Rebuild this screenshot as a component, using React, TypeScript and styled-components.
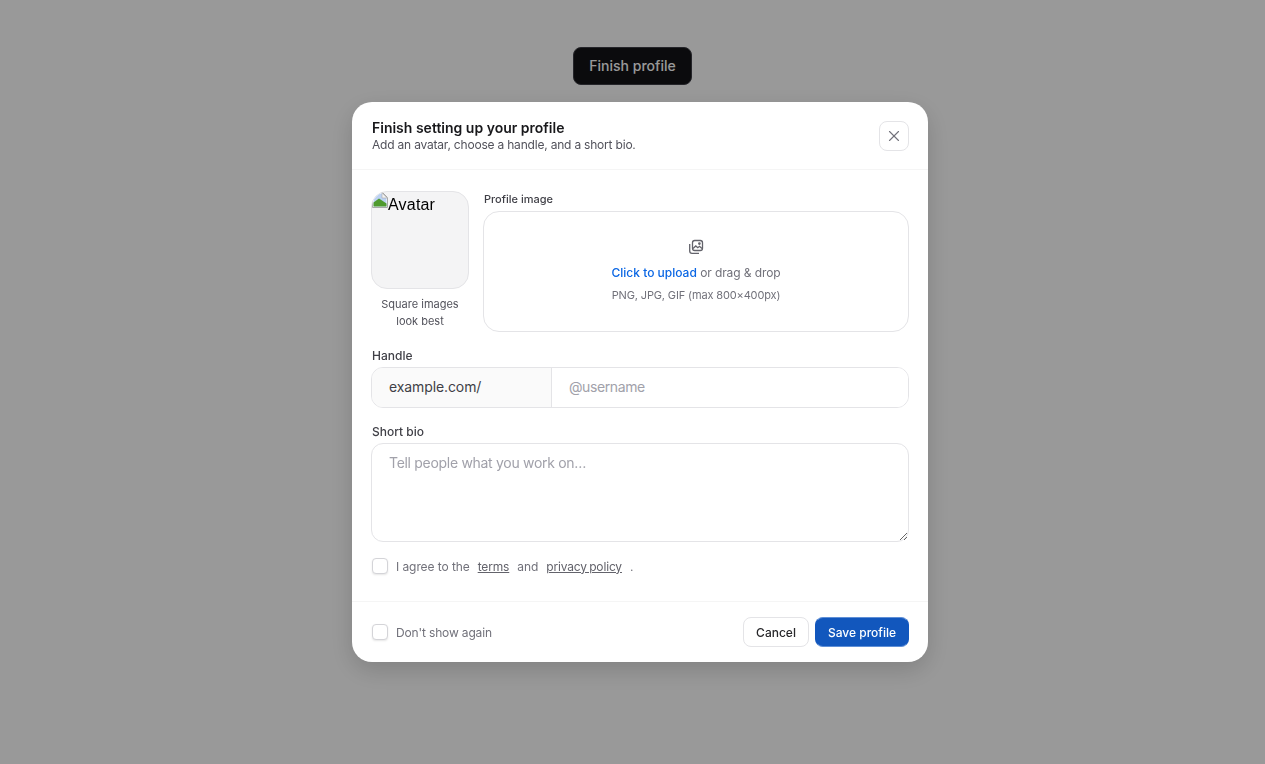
import styled, { createGlobalStyle } from "styled-components";
import { X } from "lucide-react";

const GlobalStyle = createGlobalStyle`
    * { box-sizing: border-box; }
    html, body { margin: 0; background: #fff; }
    body { font-family: Inter, "Liberation Sans", sans-serif; }
`

const Page = styled.main`
    display: flex;
    justify-content: center;
    padding-top: 47px;
    height: 764px;
`

const OpenButton = styled.button`
    width: 119px;
    height: 38px;
    padding: 0 0 2px;
    background: #131316;
    border: 1px solid #3f3f46;
    border-radius: 8px;
    color: #fff;
    font: 500 14px Inter, sans-serif;
`

const Overlay = styled.div`
    position: fixed;
    inset: 0;
    padding-left: 15px;
    background: rgba(0, 0, 0, 0.4);
    display: flex;
    align-items: center;
    justify-content: center;
`

const Modal = styled.section`
    width: 576px;
    height: 560px;
    background: #fff;
    border-radius: 20px;
    box-shadow: 0 8px 24px rgba(0, 0, 0, 0.16);
    display: flex;
    flex-direction: column;
`

const Header = styled.header`
    height: 68px;
    padding: 0 19px 0 20px;
    border-bottom: 1px solid #f5f5f5;
    display: flex;
    align-items: center;
    justify-content: space-between;
`

const Title = styled.h2`
    margin: 0;
    font-size: 14px;
    line-height: 18px;
    font-weight: 600;
    color: #18181b;
`

const Subtitle = styled.p`
    margin: 0;
    font-size: 12px;
    line-height: 16px;
    letter-spacing: -0.2px;
    color: #52525b;
`

const CloseButton = styled.button`
    width: 30px;
    height: 30px;
    padding: 0;
    background: #fff;
    border: 1px solid #e4e4e7;
    border-radius: 8px;
    color: #71717a;
    display: flex;
    align-items: center;
    justify-content: center;
`

const Body = styled.div`
    flex: 1;
    padding: 21px 19px 0 19px;
    display: flex;
    flex-direction: column;
`

const TopRow = styled.div`
    display: flex;
    gap: 14px;
`

const AvatarColumn = styled.div`
    width: 98px;
    display: flex;
    flex-direction: column;
    align-items: center;
`

const AvatarBox = styled.div`
    width: 98px;
    height: 98px;
    background: #f4f4f5;
    border: 1px solid #e4e4e7;
    border-radius: 16px;
    overflow: hidden;
    display: flex;
    align-items: flex-start;
    font: 16px/26px "Liberation Sans", sans-serif;
    letter-spacing: 0.2px;
    color: #000;
`

const AvatarHint = styled.p`
    margin: 7px 0 0;
    font-size: 11px;
    line-height: 17px;
    color: #52525b;
    text-align: center;
`

const UploadColumn = styled.div`
    flex: 1;
`

const SmallLabel = styled.div`
    padding-left: 1px;
    font-size: 11px;
    line-height: 16px;
    font-weight: 500;
    color: #3f3f46;
    margin-bottom: 4px;
`

const Dropzone = styled.div`
    height: 121px;
    border: 1px solid #e4e4e7;
    border-radius: 16px;
    display: flex;
    flex-direction: column;
    align-items: center;
    padding-top: 27px;
    color: #63636b;
`

const UploadText = styled.div`
    margin-top: 10px;
    font-size: 12px;
    line-height: 16px;
    letter-spacing: -0.1px;
    color: #71717a;
`

const UploadLink = styled.span`
    color: #0a66e4;
    font-weight: 500;
    letter-spacing: 0;
`

const UploadMeta = styled.div`
    margin-top: 6px;
    font-size: 11px;
    line-height: 16px;
    letter-spacing: -0.14px;
    color: #71717a;
`

const FieldLabel = styled.div`
    margin-top: 16px;
    margin-bottom: 3px;
    padding-left: 1px;
    font-size: 12px;
    line-height: 16px;
    font-weight: 500;
    color: #3f3f46;
`

const HandleGroup = styled.div`
    height: 41px;
    display: flex;
    border: 1px solid #e4e4e7;
    border-radius: 12px;
    overflow: hidden;
    font-size: 14px;
`

const HandlePrefix = styled.div`
    width: 180px;
    padding: 0 0 2px 17px;
    display: flex;
    align-items: center;
    background: #fafafa;
    border-right: 1px solid #e4e4e7;
    letter-spacing: -0.1px;
    color: #3f3f46;
`

const HandleInput = styled.input`
    flex: 1;
    border: 0;
    outline: 0;
    padding: 0 17px 2px;
    font: 14px Inter, sans-serif;
    letter-spacing: -0.4px;
    &::placeholder { color: #a1a1aa; }
`

const BioInput = styled.textarea`
    display: block;
    width: 100%;
    height: 99px;
    padding: 10px 17px;
    border: 1px solid #e4e4e7;
    border-radius: 12px;
    outline: 0;
    font: 14px/18px Inter, sans-serif;
    letter-spacing: -0.3px;
    &::placeholder { color: #a1a1aa; }
`

const CheckRow = styled.label`
    display: flex;
    align-items: center;
    height: 18px;
    font-size: 12px;
    color: #71717a;
`

const AgreeRow = styled(CheckRow)`
    margin-top: 15px;
    letter-spacing: -0.08px;
`

const Box = styled.span`
    width: 16px;
    height: 16px;
    margin-right: 8px;
    margin-left: 1px;
    background: #fff;
    border: 1px solid #d4d4d8;
    border-radius: 4px;
    box-shadow: 0 1px 2px rgba(0, 0, 0, 0.1);
`

const TermLink = styled.a`
    margin: 0 8px;
    color: #63636b;
    text-decoration: underline;
    letter-spacing: -0.15px;
    word-spacing: -1px;
`

const DontShow = styled.span`
    letter-spacing: -0.15px;
`

const Footer = styled.footer`
    height: 61px;
    padding: 0 19px;
    border-top: 1px solid #f5f5f5;
    display: flex;
    align-items: center;
    justify-content: space-between;
`

const Actions = styled.div`
    display: flex;
    gap: 6px;
`

const CancelButton = styled.button`
    width: 66px;
    height: 30px;
    background: #fff;
    border: 1px solid #e4e4e7;
    border-radius: 8px;
    color: #27272a;
    font: 500 12px Inter, sans-serif;
`

const SaveButton = styled.button`
    width: 94px;
    height: 30px;
    background: #1257bd;
    border: 1px solid #1257bd;
    border-top-color: #5f8fd6;
    border-bottom-color: #5f8fd6;
    border-radius: 8px;
    color: #fff;
    font: 500 12px Inter, sans-serif;
`

const BrokenImage = () => (
    <svg width="16" height="16" viewBox="0 0 16 16" style={{ flexShrink: 0 }}>
        <path d="M0.5 0.5h10l5 5v10H0.5z" fill="#fff" stroke="#a8a8a8" />
        <path d="M1.5 1.5h8.5v4.5h4.5v8.5H1.5z" fill="#bcd2f2" />
        <path d="M1.5 14.5v-4l5.5-4 7.5 5v3z" fill="#4f9a2e" />
        <path d="M10 1l5 5h-5z" fill="#f2f2f2" stroke="#a8a8a8" strokeWidth="0.6" />
    </svg>
)

const ImagesIcon = () => (
    <svg width="16" height="16" viewBox="0 0 16 16" fill="none" stroke="currentColor" strokeWidth="1.3">
        <rect x="4.5" y="1.5" width="10" height="10" rx="2.2" />
        <path d="M1.7 5v7a2.3 2.3 0 0 0 2.3 2.3H11" />
        <path d="M5 9.5l2.8-2.6 2 1.8 1.7-1.4 2.5 2.2" />
        <circle cx="11.4" cy="4.6" r="0.7" />
    </svg>
)

const App = () => {
    return (
        <>
            <GlobalStyle />
            <Page>
                <OpenButton>Finish profile</OpenButton>
            </Page>
            <Overlay>
                <Modal>
                    <Header>
                        <div>
                            <Title>Finish setting up your profile</Title>
                            <Subtitle>Add an avatar, choose a handle, and a short bio.</Subtitle>
                        </div>
                        <CloseButton><X size={18} strokeWidth={1.5} /></CloseButton>
                    </Header>
                    <Body>
                        <TopRow>
                            <AvatarColumn>
                                <AvatarBox><BrokenImage />Avatar</AvatarBox>
                                <AvatarHint>Square images<br />look best</AvatarHint>
                            </AvatarColumn>
                            <UploadColumn>
                                <SmallLabel>Profile image</SmallLabel>
                                <Dropzone>
                                    <ImagesIcon />
                                    <UploadText><UploadLink>Click to upload</UploadLink> or drag &amp; drop</UploadText>
                                    <UploadMeta>PNG, JPG, GIF (max 800×400px)</UploadMeta>
                                </Dropzone>
                            </UploadColumn>
                        </TopRow>
                        <FieldLabel>Handle</FieldLabel>
                        <HandleGroup>
                            <HandlePrefix>example.com/</HandlePrefix>
                            <HandleInput placeholder="@username" />
                        </HandleGroup>
                        <FieldLabel>Short bio</FieldLabel>
                        <BioInput placeholder="Tell people what you work on…" />
                        <AgreeRow>
                            <Box />I agree to the<TermLink>terms</TermLink>and<TermLink>privacy policy</TermLink>.
                        </AgreeRow>
                    </Body>
                    <Footer>
                        <CheckRow><Box /><DontShow>Don't show again</DontShow></CheckRow>
                        <Actions>
                            <CancelButton>Cancel</CancelButton>
                            <SaveButton>Save profile</SaveButton>
                        </Actions>
                    </Footer>
                </Modal>
            </Overlay>
        </>
    );
}

export default App;
